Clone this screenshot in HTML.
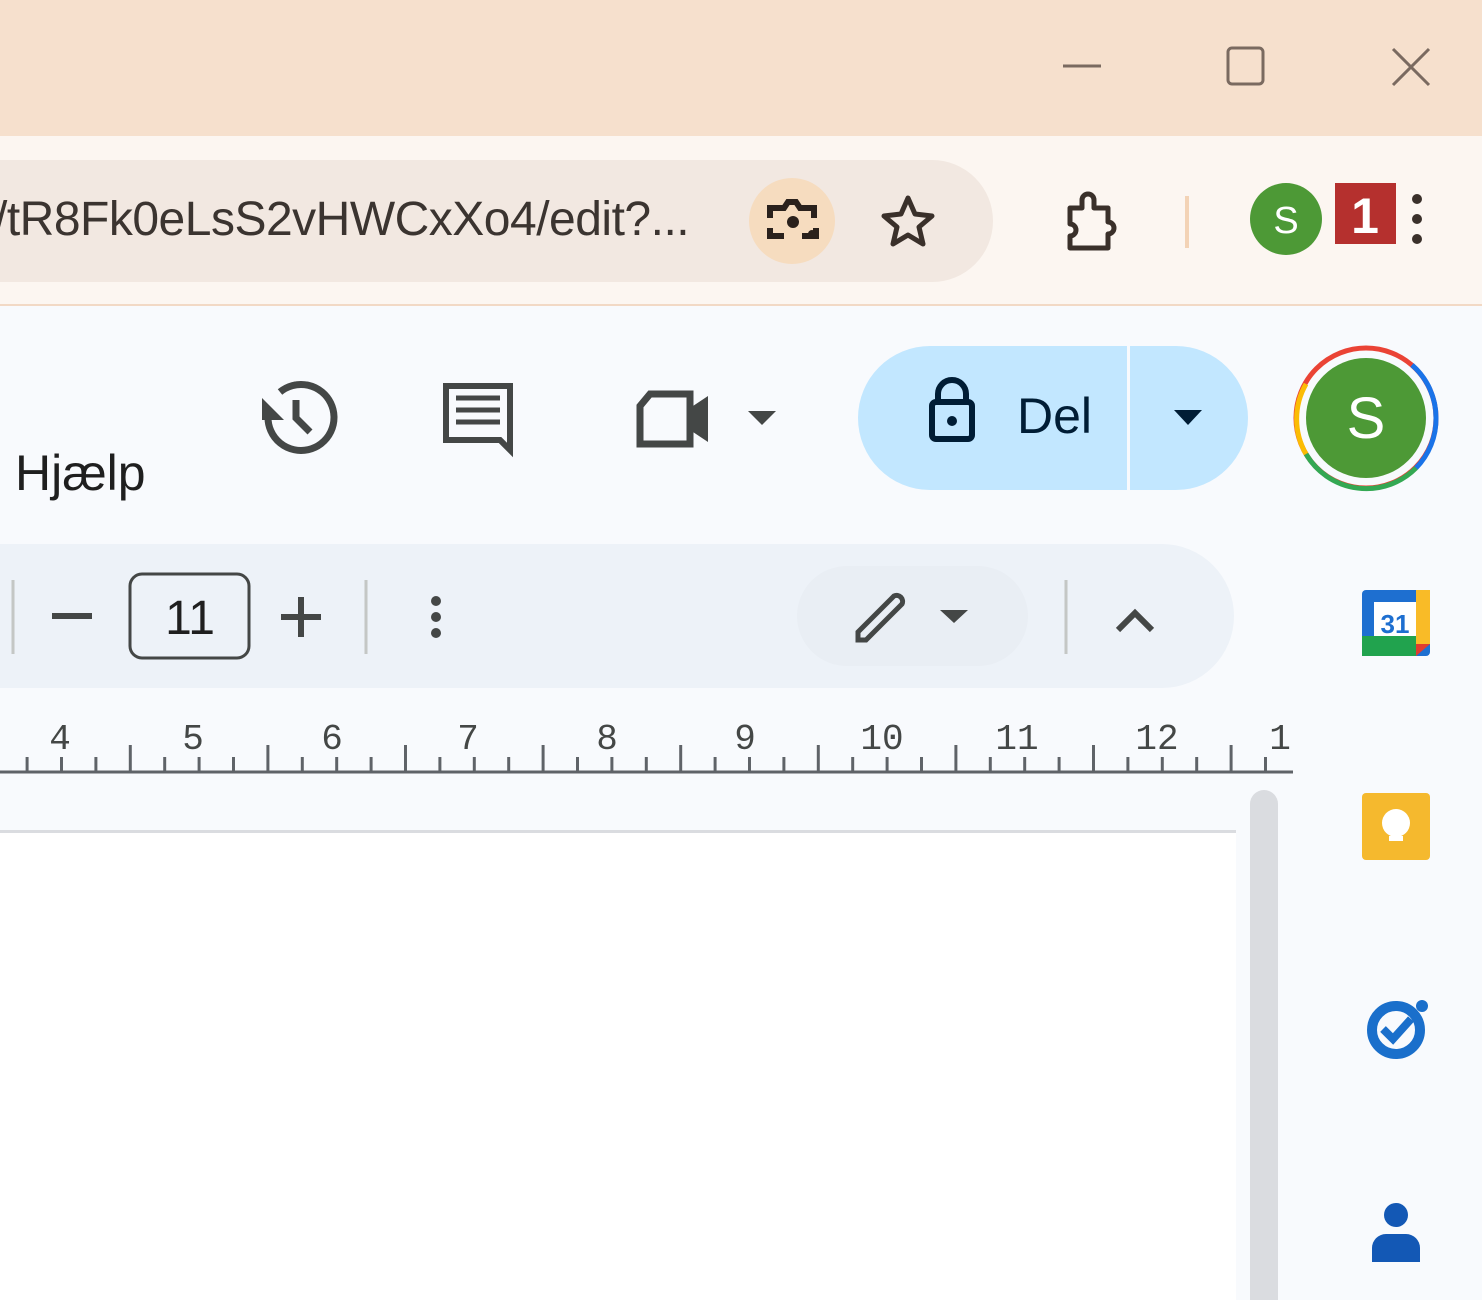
<!DOCTYPE html>
<html><head><meta charset="utf-8"><style>
html,body{margin:0;width:1482px;height:1300px;overflow:hidden}
body{background:#f8fafd;font-family:"Liberation Sans",sans-serif;position:relative}
.a{position:absolute}
</style></head><body>
<div class="a" style="left:0;top:0;width:1482px;height:136px;background:#f6e0cd"></div>
<svg class="a" style="left:0;top:0" width="1482" height="136">
<line x1="1063" y1="66" x2="1101" y2="66" stroke="#7a6a60" stroke-width="3"/>
<rect x="1228" y="48" width="35" height="36" rx="4" fill="none" stroke="#7a6a60" stroke-width="3"/>
<path d="M1393 49L1429 85M1429 49L1393 85" stroke="#7a6a60" stroke-width="3"/>
</svg>
<div class="a" style="left:0;top:136px;width:1482px;height:169px;background:#fcf6f1"></div>
<div class="a" style="left:0;top:304px;width:1482px;height:2px;background:#f2d9c5"></div>
<div class="a" style="left:-80px;top:160px;width:1073px;height:122px;border-radius:61px;background:#f2e8e1"></div>
<div class="a" style="left:-6px;top:192px;font-size:48px;color:#3b3430;white-space:nowrap;letter-spacing:-0.5px">/tR8Fk0eLsS2vHWCxXo4/edit?...</div>
<div class="a" style="left:749px;top:178px;width:86px;height:86px;border-radius:50%;background:#f6dcbf"></div>
<svg class="a" style="left:0;top:136px" width="1482" height="169">
<g fill="none" stroke="#2a211c" stroke-width="6">
<path d="M770 82v-10h14l4-6h8l4 6h14v10M770 92v8h14M802 100h14v-8"/>
</g>
<circle cx="793" cy="86" r="6" fill="#2a211c"/><circle cx="812" cy="98" r="4" fill="#2a211c"/>
<path d="M908 62l7 16 17 2-13 11 4 17-15-9-15 9 4-17-13-11 17-2z" fill="none" stroke="#3a302a" stroke-width="5" stroke-linejoin="round"/>
<path d="M1070 72h12v-8a6 6 0 0 1 12 0v8h14v14a6 6 0 0 1 0 12v14h-38v-12a6 6 0 0 0 0-12z" fill="none" stroke="#3a302a" stroke-width="5" stroke-linejoin="round"/>
<line x1="1187" y1="60" x2="1187" y2="112" stroke="#f3d3b6" stroke-width="4"/>
<circle cx="1286" cy="83" r="36" fill="#4d9936"/>
<text x="1286" y="97" font-size="38" fill="#fff" text-anchor="middle" font-family="Liberation Sans">S</text>
<rect x="1335" y="47" width="61" height="61" fill="#b5302e"/>
<text x="1365" y="97" font-size="50" font-weight="bold" fill="#fff" text-anchor="middle" font-family="Liberation Sans">1</text>
<circle cx="1417" cy="63" r="5" fill="#3a302a"/><circle cx="1417" cy="83" r="5" fill="#3a302a"/><circle cx="1417" cy="103" r="5" fill="#3a302a"/>
</svg>
<div class="a" style="left:15px;top:444px;font-size:50px;color:#1f1f1f">Hjælp</div>
<svg class="a" style="left:0;top:306px" width="1482" height="400">
<g fill="none" stroke="#444746" stroke-width="7">
<path d="M268 111a33 33 0 1 0 12-25"/><path d="M296 94v18l14 14"/>
<path d="M446 80h64v64l-10-10h-54z" stroke-width="6"/>
<path d="M456 92h44M456 104h44M456 116h44" stroke-width="5"/>
<path d="M650 88h40v50h-50v-38z" stroke-width="7"/>
</g>
<path d="M262 92v22h22z" fill="#444746"/>
<path d="M690 102l18-12v46l-18-12z" fill="#444746"/>
<path d="M748 105h28l-14 14z" fill="#444746"/>
</svg>
<div class="a" style="left:858px;top:346px;width:390px;height:144px;border-radius:72px;background:#c2e7ff"></div>
<div class="a" style="left:1127px;top:346px;width:3px;height:144px;background:#f8fafd"></div>
<svg class="a" style="left:858px;top:346px" width="390" height="144">
<path d="M80 58v-10a14 14 0 0 1 28 0v10" fill="none" stroke="#001d35" stroke-width="6"/>
<rect x="74" y="56" width="40" height="37" rx="4" fill="none" stroke="#001d35" stroke-width="6"/>
<circle cx="94" cy="75" r="5" fill="#001d35"/>
<path d="M316 64h28l-14 15z" fill="#001d35"/>
</svg>
<div class="a" style="left:1017px;top:387px;font-size:50px;color:#001d35">Del</div>
<svg class="a" style="left:1292px;top:344px" width="148" height="148">
<circle cx="74" cy="74" r="70" fill="none" stroke="#ea4335" stroke-width="5"/>
<path d="M120 21a70 70 0 0 1 24 53" fill="none" stroke="#1a73e8" stroke-width="5"/>
<path d="M144 74a70 70 0 0 1-20 50" fill="none" stroke="#1a73e8" stroke-width="5"/>
<path d="M14 110a70 70 0 0 0 110 14" fill="none" stroke="#34a853" stroke-width="5"/>
<path d="M14 110a70 70 0 0 1 0-70" fill="none" stroke="#fbbc04" stroke-width="5"/>
<circle cx="74" cy="74" r="60" fill="#4d9936"/>
<text x="74" y="94" font-size="58" fill="#fff" text-anchor="middle" font-family="Liberation Sans">S</text>
</svg>
<div class="a" style="left:-100px;top:544px;width:1334px;height:144px;border-radius:72px;background:#edf2f8"></div>
<div class="a" style="left:797px;top:566px;width:231px;height:100px;border-radius:50px;background:#e9eef4"></div>
<svg class="a" style="left:0;top:544px" width="1240" height="144">
<g stroke="#c4c7c5" stroke-width="3"><line x1="13" y1="36" x2="13" y2="110"/><line x1="366" y1="36" x2="366" y2="110"/><line x1="1066" y1="36" x2="1066" y2="110"/></g>
<g stroke="#444746" stroke-width="6" fill="none">
<line x1="52" y1="72" x2="92" y2="72"/><path d="M301 53v40M281 73h40"/>
<path d="M858 88l36-36a6 6 0 0 1 8 8l-36 36h-8z" stroke-width="5"/>
<path d="M1118 86l17-17 17 17"/>
</g>
<rect x="130" y="30" width="119" height="84" rx="12" fill="none" stroke="#444746" stroke-width="3"/>
<text x="190" y="90" font-size="48" fill="#1f1f1f" text-anchor="middle" font-family="Liberation Sans">11</text>
<circle cx="436" cy="57" r="5" fill="#444746"/><circle cx="436" cy="73" r="5" fill="#444746"/><circle cx="436" cy="89" r="5" fill="#444746"/>
<path d="M940 66h28l-14 13z" fill="#444746"/>
</svg>
<svg class="a" style="left:0;top:700px" width="1300" height="80">
<defs><pattern id="t" x="25.6" y="0" width="137.6" height="80" patternUnits="userSpaceOnUse">
<g stroke="#5f6368" stroke-width="3"><line x1="1.5" y1="57" x2="1.5" y2="72"/><line x1="35.9" y1="57" x2="35.9" y2="72"/><line x1="70.3" y1="57" x2="70.3" y2="72"/><line x1="104.7" y1="45" x2="104.7" y2="72"/></g>
</pattern></defs>
<rect x="0" y="0" width="1293" height="72" fill="url(#t)"/>
<line x1="0" y1="72" x2="1293" y2="72" stroke="#5f6368" stroke-width="3"/>
<g font-family="Liberation Mono" font-size="36" fill="#444746" text-anchor="middle">
<text x="60" y="49">4</text><text x="193" y="49">5</text><text x="332" y="49">6</text><text x="468" y="49">7</text><text x="607" y="49">8</text><text x="745" y="49">9</text><text x="882" y="49">10</text><text x="1017" y="49">11</text><text x="1157" y="49">12</text><text x="1280" y="49">1</text>
</g>
</svg>
<div class="a" style="left:0;top:830px;width:1236px;height:470px;background:#fff;border-top:3px solid #dadce0"></div>
<div class="a" style="left:1250px;top:790px;width:28px;height:510px;border-radius:14px 14px 0 0;background:#dadce0"></div>
<svg class="a" style="left:1350px;top:580px" width="100" height="700">
<rect x="12" y="10" width="68" height="66" rx="4" fill="#1e6fd0"/>
<rect x="12" y="56" width="54" height="20" fill="#21a34e"/>
<rect x="66" y="10" width="14" height="54" fill="#f9bb27"/>
<path d="M66 64h14l-14 12z" fill="#e03c2f"/>
<rect x="24" y="22" width="42" height="34" fill="#fff"/>
<text x="45" y="53" font-size="26" font-weight="bold" fill="#1e6fd0" text-anchor="middle" font-family="Liberation Sans">31</text>
<rect x="12" y="213" width="68" height="67" rx="4" fill="#f5b92e"/>
<circle cx="46" cy="243" r="14" fill="#fff"/><rect x="39" y="256" width="14" height="5" fill="#fff"/>
<circle cx="46" cy="450" r="24" fill="none" stroke="#1a6fcb" stroke-width="10"/>
<path d="M33 449l10 10 18-20" fill="none" stroke="#1a6fcb" stroke-width="8"/>
<circle cx="72" cy="426" r="6" fill="#1a6fcb"/>
<circle cx="46" cy="635" r="12" fill="#1358b5"/>
<path d="M22 682v-14a14 14 0 0 1 14-14h20a14 14 0 0 1 14 14v14z" fill="#1358b5"/>
</svg>
</body></html>
